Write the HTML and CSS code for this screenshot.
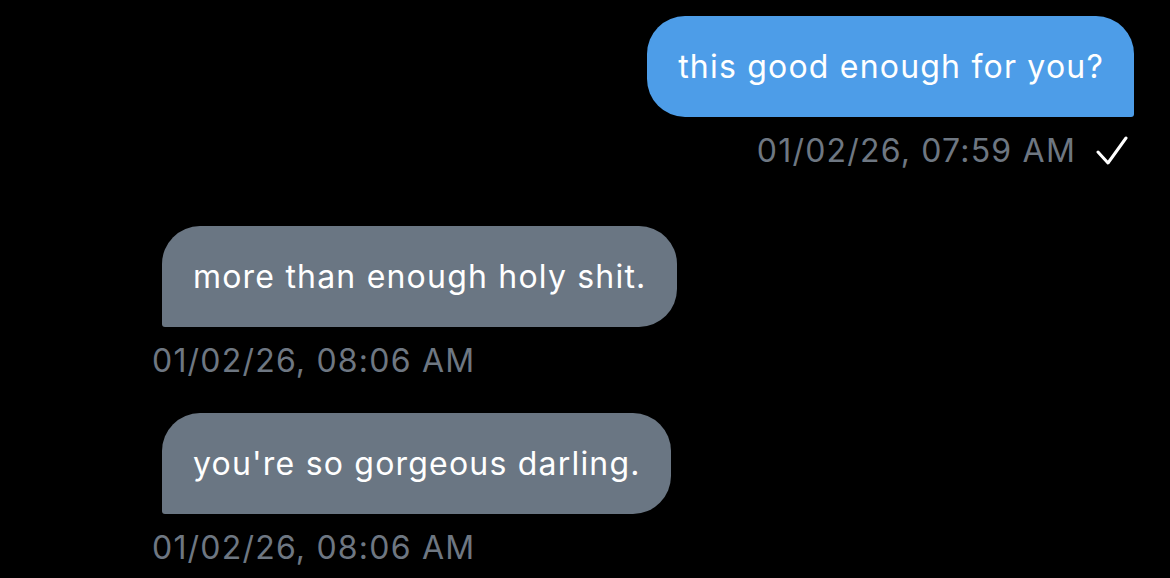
FILE: index.html
```html
<!DOCTYPE html>
<html lang="en">
<head>
<meta charset="utf-8">
<title>Messages</title>
<link rel="stylesheet" href="styles.css">
</head>
<body>
<main class="chat">
  <section class="group group-out">
    <div class="bubble bubble-out">this good enough for you?</div>
    <div class="meta meta-out">
      <span class="time">01/02/26, 07:59 AM</span>
      <svg class="check" width="32" height="30" viewBox="0 0 32 30" aria-hidden="true">
        <polyline points="2,16 12,27 30,2" fill="none" stroke="#ffffff" stroke-width="3" stroke-linecap="round" stroke-linejoin="round"/>
      </svg>
    </div>
  </section>
  <section class="group group-in">
    <div class="bubble bubble-in">more than enough holy shit.</div>
    <div class="meta meta-in"><span class="time">01/02/26, 08:06 AM</span></div>
  </section>
  <section class="group group-in group-cont">
    <div class="bubble bubble-in">you're so gorgeous darling.</div>
    <div class="meta meta-in"><span class="time">01/02/26, 08:06 AM</span></div>
  </section>
</main>
</body>
</html>
```

FILE: styles.css
```css
html, body {
  margin: 0;
  padding: 0;
  background: #000000;
}

body {
  width: 1170px;
  height: 578px;
  overflow: hidden;
  font-family: Inter, "Noto Sans", "Liberation Sans", sans-serif;
  color: #ffffff;
}

.chat {
  display: flex;
  flex-direction: column;
  padding-top: 16px;
}

.group {
  display: flex;
  flex-direction: column;
}

.group-out {
  align-items: flex-end;
  padding-right: 36px;
}

.group-in {
  align-items: flex-start;
  padding-left: 152px;
  margin-top: 55px;
}

.group-in.group-cont {
  margin-top: 32px;
}

.bubble {
  font-size: 32px;
  line-height: 37px;
  letter-spacing: 1.2px;
  padding: 32px 30px 32px 31px;
  white-space: nowrap;
}

.bubble-out {
  background: #4d9de8;
  border-radius: 38px 38px 3px 38px;
}

.bubble-in {
  background: #6a7683;
  border-radius: 38px 38px 38px 3px;
  margin-left: 10px;
}

.meta {
  display: flex;
  align-items: center;
  margin-top: 14px;
  height: 40px;
  font-size: 32px;
  line-height: 40px;
  letter-spacing: 1.2px;
  color: #6e7782;
}

.meta-out {
  gap: 20px;
  padding-right: 6px;
}

.check {
  display: block;
}
```
